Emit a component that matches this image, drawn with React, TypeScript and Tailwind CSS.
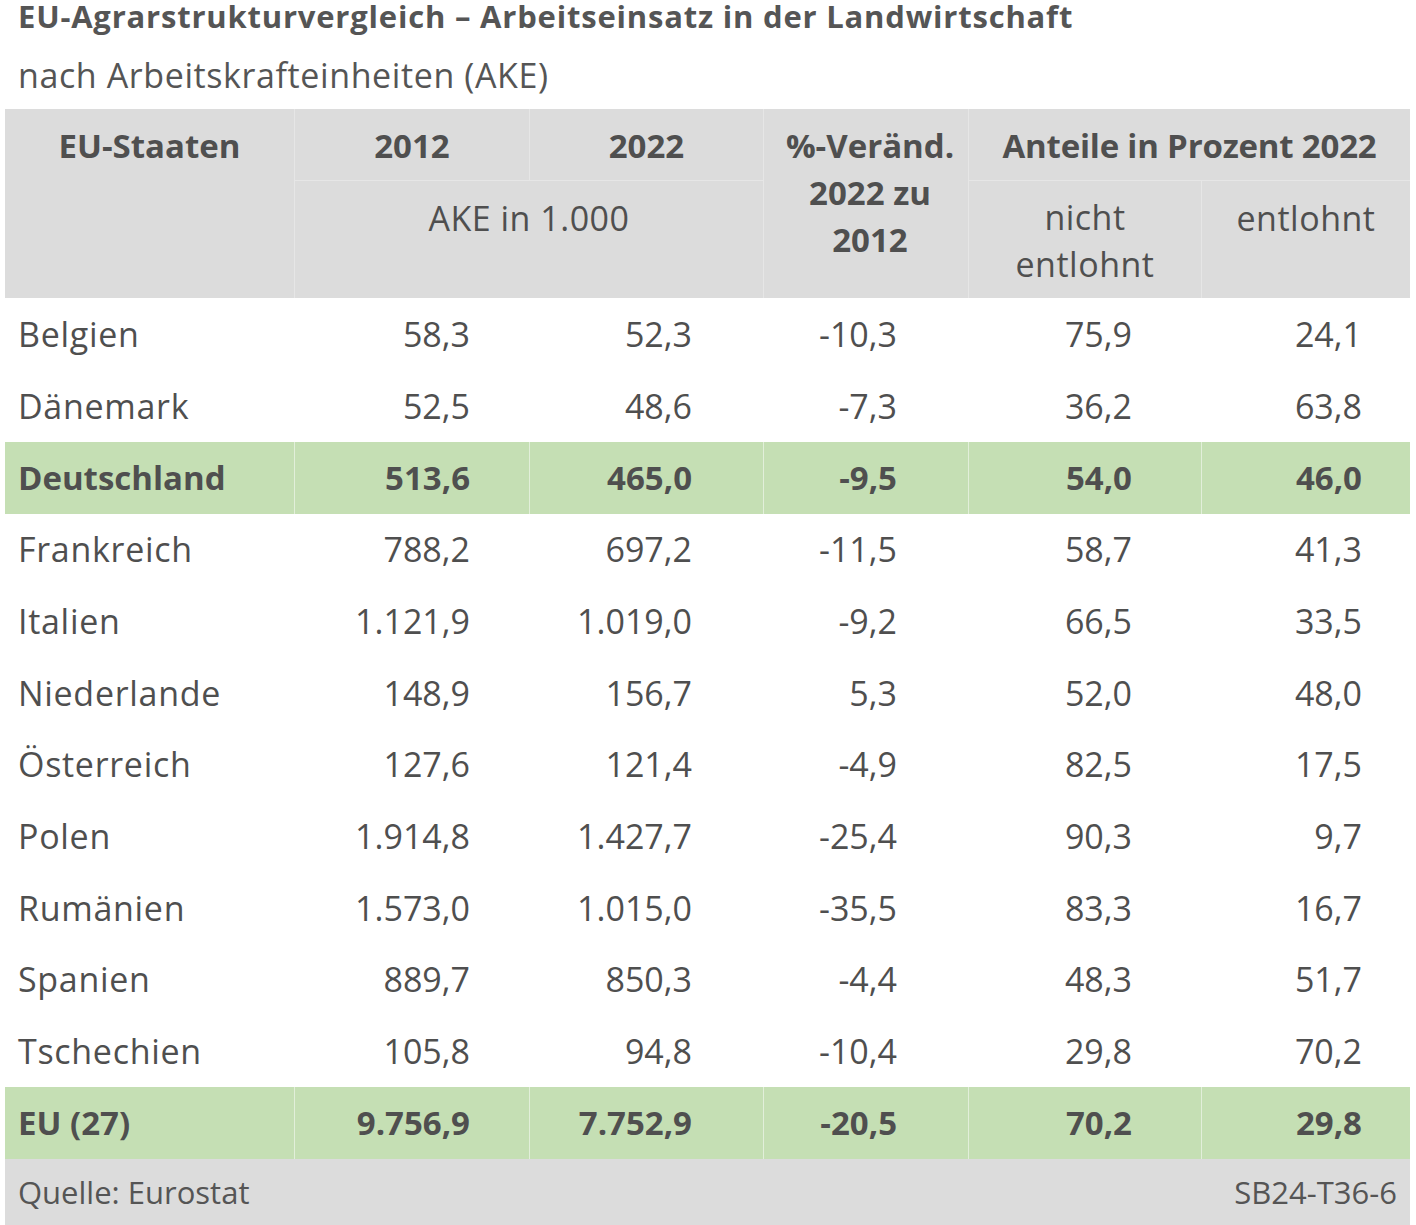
const rows: { name: string; v: string[]; hl?: boolean }[] = [
    { name: "Belgien", v: ["58,3", "52,3", "-10,3", "75,9", "24,1"] },
    { name: "Dänemark", v: ["52,5", "48,6", "-7,3", "36,2", "63,8"] },
    { name: "Deutschland", v: ["513,6", "465,0", "-9,5", "54,0", "46,0"], hl: true },
    { name: "Frankreich", v: ["788,2", "697,2", "-11,5", "58,7", "41,3"] },
    { name: "Italien", v: ["1.121,9", "1.019,0", "-9,2", "66,5", "33,5"] },
    { name: "Niederlande", v: ["148,9", "156,7", "5,3", "52,0", "48,0"] },
    { name: "Österreich", v: ["127,6", "121,4", "-4,9", "82,5", "17,5"] },
    { name: "Polen", v: ["1.914,8", "1.427,7", "-25,4", "90,3", "9,7"] },
    { name: "Rumänien", v: ["1.573,0", "1.015,0", "-35,5", "83,3", "16,7"] },
    { name: "Spanien", v: ["889,7", "850,3", "-4,4", "48,3", "51,7"] },
    { name: "Tschechien", v: ["105,8", "94,8", "-10,4", "29,8", "70,2"] },
    { name: "EU (27)", v: ["9.756,9", "7.752,9", "-20,5", "70,2", "29,8"], hl: true },
];

const padRight = ["pr-[59px]", "pr-[71px]", "pr-[71px]", "pr-[69px]", "pr-[48px]"];

const cols = "grid grid-cols-[290px_235px_234px_205px_233px_208px]";

export default function App() {
    return (
        <div
            className="w-[1416px] h-[1225px] bg-white text-[#4f4f4f] overflow-hidden"
            style={{ fontFamily: "'Open Sans', Lato, sans-serif" }}
        >
            <div className="pl-[18px] h-[109px]">
                <h1 className="text-[31px] font-bold leading-[32px] tracking-[0.8px] text-[#555]">
                    EU-Agrarstrukturvergleich – Arbeitseinsatz in der Landwirtschaft
                </h1>
                <p className="mt-[25px] text-[34px] leading-[36px] tracking-[0.6px] text-[#555]">
                    nach Arbeitskrafteinheiten (AKE)
                </p>
            </div>

            <div className="mx-[5px] w-[1405px]">
                {/* header */}
                <div className={`${cols} grid-rows-[72px_117px] bg-[#dcdcdc]`}>
                    <div className="row-span-2 border-r border-[#e6e6e6] pt-[18px] text-center text-[33px] font-bold leading-[38px]">
                        EU-Staaten
                    </div>
                    <div className="border-r border-b border-[#e6e6e6] pt-[18px] text-center text-[33px] font-bold leading-[38px]">
                        2012
                    </div>
                    <div className="border-r border-b border-[#e6e6e6] pt-[18px] text-center text-[33px] font-bold leading-[38px]">
                        2022
                    </div>
                    <div className="row-span-2 border-r border-[#e6e6e6] pl-[8px] pt-[13px] text-center text-[33px] font-bold leading-[47px]">
                        %-Veränd.
                        <br />
                        2022 zu
                        <br />
                        2012
                    </div>
                    <div className="col-span-2 border-b border-[#e6e6e6] pt-[18px] text-center text-[33px] font-bold leading-[38px] tracking-[-0.2px]">
                        Anteile in Prozent 2022
                    </div>
                    <div className="col-start-2 col-span-2 border-r border-[#e6e6e6] pt-[18px] text-center text-[34px] leading-[38px] tracking-[0.5px]">
                        AKE in 1.000
                    </div>
                    <div className="col-start-5 border-r border-[#e6e6e6] pt-[13px] text-center text-[34px] leading-[47px] tracking-[0.5px]">
                        nicht
                        <br />
                        entlohnt
                    </div>
                    <div className="col-start-6 pt-[18px] text-center text-[34px] leading-[38px] tracking-[0.5px]">
                        entlohnt
                    </div>
                </div>

                {/* body */}
                <div className="mt-px">
                    {rows.map((r) => (
                        <div
                            key={r.name}
                            className={`${cols} h-[71.67px] ${
                                r.hl ? "bg-[#c5dfb4] text-[33px] font-bold" : "bg-white text-[34px]"
                            }`}
                        >
                            <div
                                className={`flex items-center border-r border-white/50 pl-[13px] ${
                                    r.hl ? "" : "tracking-[0.7px]"
                                }`}
                            >
                                {r.name}
                            </div>
                            {r.v.map((val, i) => (
                                <div
                                    key={i}
                                    className={`flex items-center justify-end ${padRight[i]} ${
                                        i < 4 ? "border-r border-white/50" : ""
                                    }`}
                                >
                                    {val}
                                </div>
                            ))}
                        </div>
                    ))}
                </div>

                {/* footer */}
                <div className="flex h-[66px] items-center justify-between bg-[#dcdcdc] px-[13px] text-[31px] text-[#555]">
                    <span>Quelle: Eurostat</span>
                    <span>SB24-T36-6</span>
                </div>
            </div>
        </div>
    );
}
